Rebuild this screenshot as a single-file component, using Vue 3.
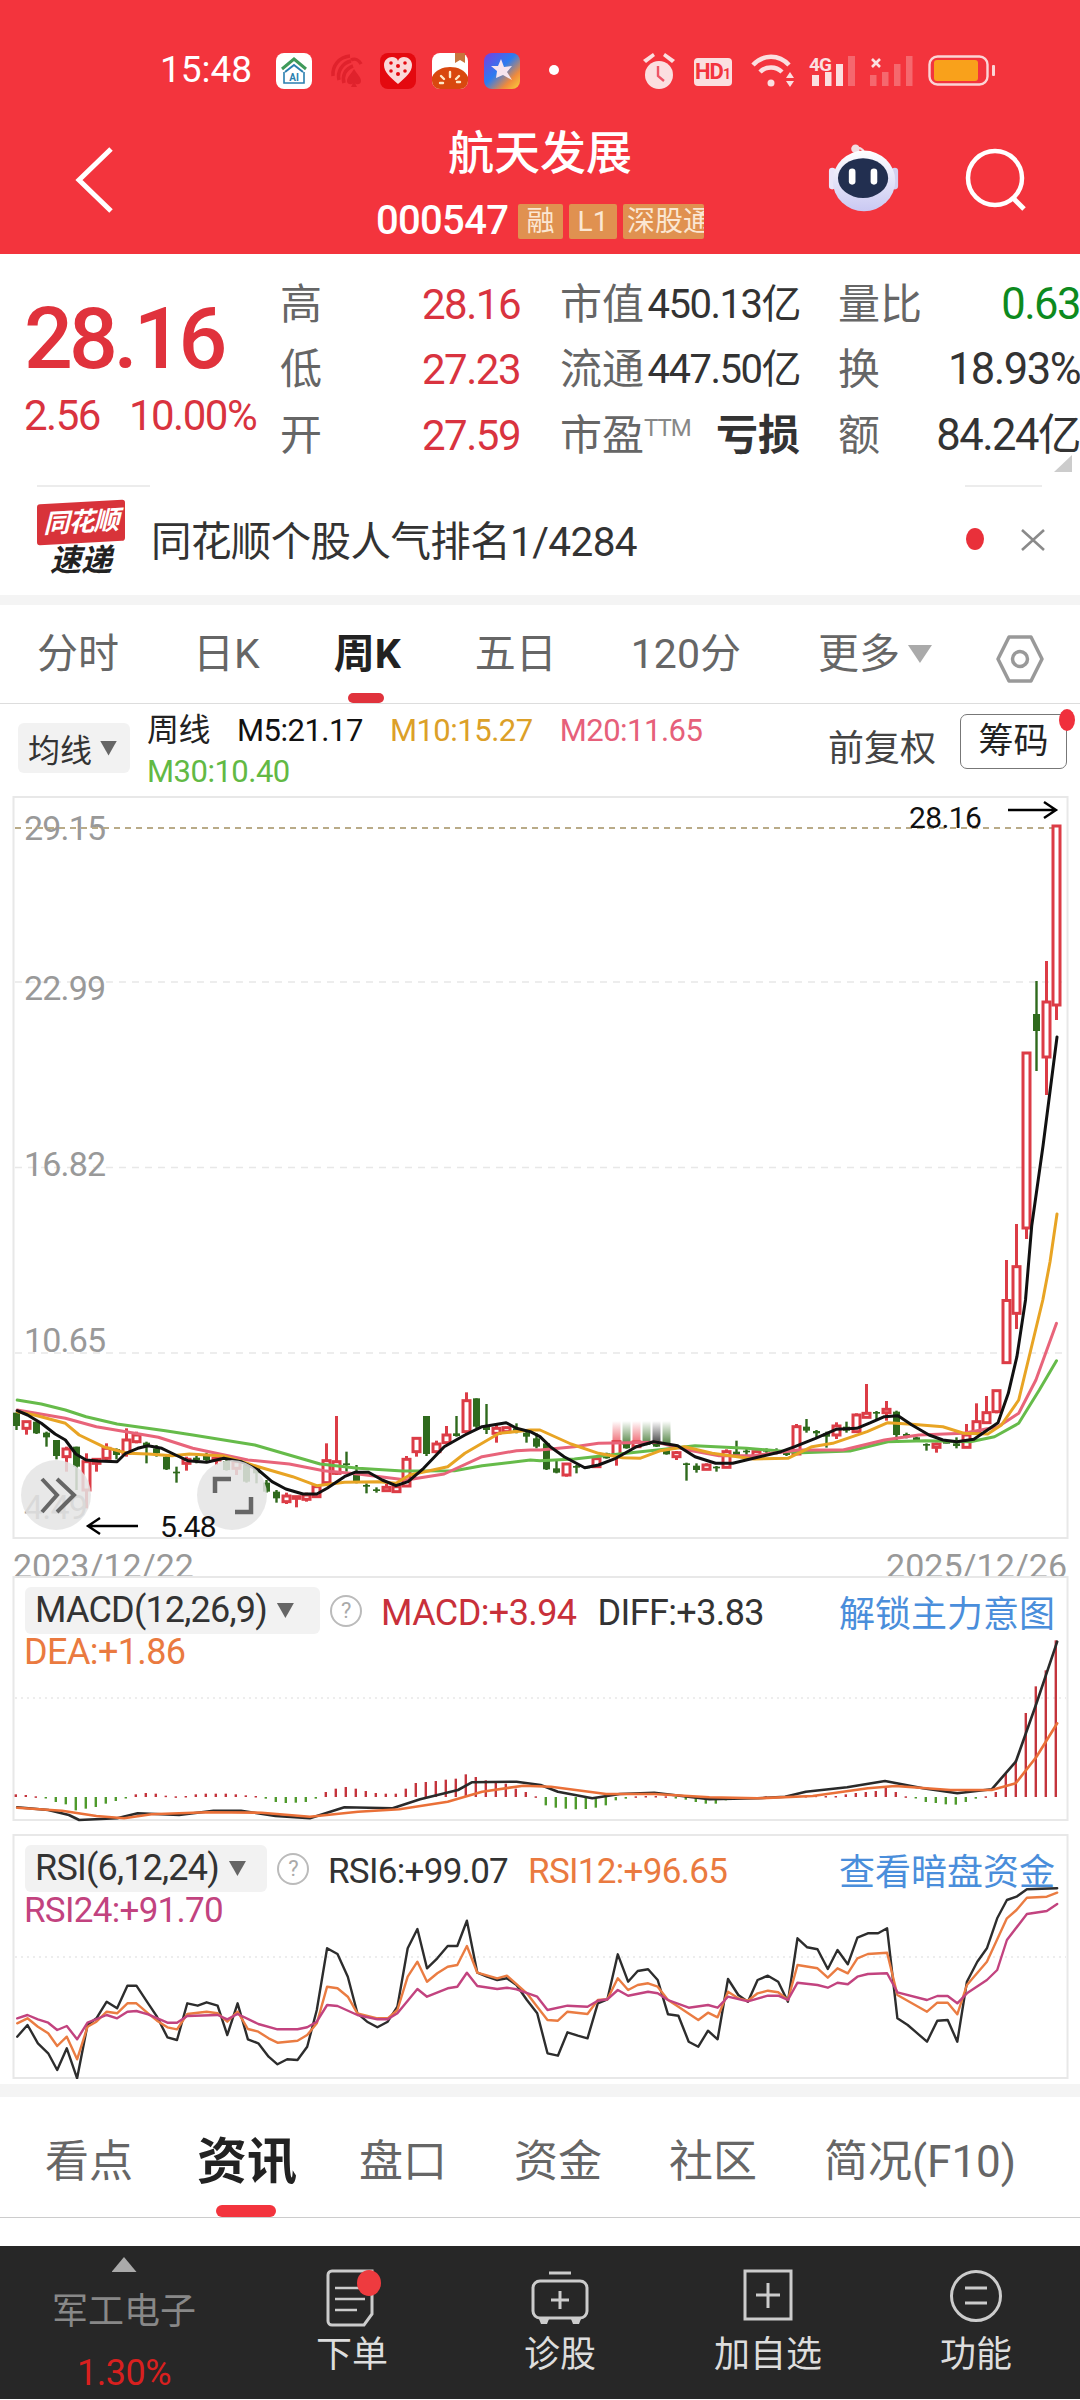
<script setup>
const Y = (z) => 1300 + z / 3
const line4 = (pts) => pts.map(([x, y]) => `${(x / 2.904).toFixed(1)},${Y(y).toFixed(1)}`)
const line5 = (pts) => pts.map(([x, y]) => `${(540 + x / 2.904).toFixed(1)},${Y(y).toFixed(1)}`)

const ma5 = [...line4([[50,332],[80,345],[120,370],[160,402],[190,420],[220,462],[250,480],[285,483],[340,485],[365,460],[400,445],[430,437],[470,445],[510,465],[545,482],[600,487],[650,475],[700,485],[750,510],[790,545],[830,567],[880,582],[920,582],[950,565],[1000,530],[1030,517],[1070,517],[1110,540],[1150,557],[1185,545],[1230,505],[1290,440],[1350,405],[1400,380],[1470,368],[1500,385],[1540,395]]),
  ...line5([[0,410],[30,440],[70,470],[130,503],[170,495],[220,475],[280,440],[330,425],[400,437],[450,470],[510,490],[560,490],[620,475],[700,455],[740,440],[800,415],[860,388],[920,385],[960,368],[1000,350],[1040,347],[1080,375],[1130,405],[1170,420],[1210,425],[1260,418],[1330,368],[1360,280],[1385,170],[1410,0]]), '1031.7,1226', '1043,1146', '1057,1037'].join(' ')
const ma10 = [...line4([[50,335],[100,345],[190,370],[230,405],[300,440],[370,460],[430,462],[500,467],[550,462],[650,468],[750,500],[850,530],[920,557],[1000,547],[1100,545],[1150,550],[1190,525],[1300,500],[1350,460],[1450,400],[1540,390]]),
  ...line5([[0,390],[90,432],[170,460],[240,473],[290,475],[350,452],[420,440],[500,460],[620,477],[720,475],[790,440],[850,430],[950,395],[1010,368],[1080,373],[1170,380],[1230,400],[1300,402],[1340,375],[1390,300],[1460,0]]), '1050,1262', '1057,1214'].join(' ')
const ma20 = [...line4([[50,330],[190,355],[280,380],[460,412],[560,445],[720,480],[840,492],[940,512],[1040,522],[1180,540],[1290,522],[1400,470],[1500,452],[1540,450]]),
  ...line5([[0,450],[100,440],[170,430],[340,427],[430,450],[520,467],[620,467],[750,450],[880,450],[1000,420],[1100,405],[1230,400],[1330,380],[1390,340],[1440,240],[1500,70]])].join(' ')
const ma30 = [...line4([[50,300],[120,312],[190,330],[250,350],[340,372],[480,392],[560,405],[740,435],[930,492],[1040,505],[1170,513],[1320,512],[1400,497],[1540,480]]),
  ...line5([[0,482],[100,477],[230,462],[340,450],[450,437],[600,445],[760,458],[900,453],[1010,425],[1120,422],[1250,425],[1320,410],[1390,370],[1450,270],[1500,182]])].join(' ')

const raw = [
['g',338,338,378,390],['r',365,365,385,404],['g',365,365,400,402],['g',395,398,412,440],['g',420,420,468,478],['r',440,447,470,515],['g',440,440,500,570],['r',460,485,570,625],['r',475,478,490,515],['r',430,445,475,480],
['g',445,447,465,478],['r',385,420,460,470],['r',395,405,425,430],['g',425,428,440,490],['g',435,445,460,470],['g',465,470,508,510],['g',500,515,520,548],['r',470,478,490,512],['g',468,473,480,490],['g',458,465,480,488],
['r',470,475,480,495],['g',475,483,510,512],['r',480,485,505,525],['g',490,495,545,548],['g',500,505,520,550],['g',540,548,575,578],['g',570,575,595,608],['r',578,588,605,612],['r',588,590,592,622],['r',578,585,598,605],
['r',558,560,590,592],['r',430,482,548,555],['r',348,485,520,525],['g',455,490,492,515],['g',495,520,545,550],['g',550,555,560,580],['g',562,568,572,578],['r',552,562,572,575],['r',555,560,575,578],['r',468,478,558,560],
['r',412,415,455,470],['g',348,348,462,468],['r',422,432,455,460],['r',378,405,428,430],['g',348,400,408,410],['r',277,302,395,405],['g',295,295,380,385],['g',312,375,390,402],['r',375,385,400,428],['r',380,383,395,400],
['g',370,385,392,400],['g',390,398,410,428],['g',400,415,440,445],['g',430,430,508,510],['g',480,505,518,520],['r',490,492,525,530],['g',495,498,500,520],['g',498,498,505,506],['r',472,476,500,503],['g',458,460,475,476],
['r',425,425,465,497],['g',430,432,445,446],['r',425,426,440,441],['g',430,430,435,436],['g',425,426,440,441],['g',445,450,463,464],['r',453,458,470,480],['g',488,490,495,542],['g',490,497,510,518],['r',490,495,508,510],
['g',498,500,505,515],['r',448,455,502,504],['g',422,455,465,470],['g',445,452,455,465],['r',452,455,470,472],['g',445,450,455,465],['g',445,452,458,463],['g',452,455,465,468],['r',372,380,462,465],['g',357,380,392,398],
['g',390,393,400,412],['g',395,400,410,443],['r',367,378,405,417],['g',365,380,392,398],['r',340,345,395,398],['r',252,340,352,354],['g',333,336,340,362],['r',303,328,338,362],['g',332,335,405,420],['g',398,402,408,415],
['g',410,412,420,422],['g',430,432,435,452],['r',428,432,442,458],['g',425,426,428,430],['g',412,430,438,445],['r',372,405,442,443],['r',310,365,395,400],['r',288,338,368,370],['r',270,272,335,340],['r',-120,1.5,188,190],
['r',-228,-100,40,87],['r',-741,-741,-216,-183],['g',-957,-858,-807,-687],['r',-1017,-894,-729,-615],['r',-1422,-1422,-885,-840]]
const candles = raw.map(([c, h, t, b, l], i) => ({
  c, x: 16.5 + 10 * i, h: Y(h), t: Y(t), b: Y(Math.max(b, t + 5)), l: Y(l), key: i
}))
const fades = [
  { x: 616.5, id: 'fr' }, { x: 626.5, id: 'fg' }, { x: 636.5, id: 'fr' },
  { x: 646.5, id: 'fg' }, { x: 656.5, id: 'fk' }, { x: 666.5, id: 'fg' }
]

const mx = (x) => (x / 1.452).toFixed(1)
const my = (y) => (1570 + y / 3).toFixed(1)
const mpts = (a) => a.map(([x, y]) => `${mx(x)},${my(y)}`).join(' ')
const diff = mpts([[25,712],[70,720],[100,735],[115,750],[170,745],[200,730],[260,735],[310,722],[350,722],[400,738],[450,745],[500,712],[570,715],[610,688],[665,660],[685,637],[750,635],[785,645],[810,665],[860,685],[900,672],[950,668],[1030,688],[1100,685],[1140,680],[1170,665],[1230,652],[1285,633],[1340,655],[1390,670],[1440,658],[1475,575],[1505,400],[1535,215]])
const dea = mpts([[25,713],[90,722],[140,738],[180,745],[220,733],[300,727],[380,728],[450,740],[520,725],[580,718],[650,695],[700,665],[760,647],[800,650],[880,672],[950,672],[1030,682],[1100,685],[1180,678],[1260,655],[1300,648],[1380,660],[1440,660],[1475,640],[1505,560],[1535,460]])
const barH = [8,6,2,-2,-15,-22,-40,-35,-30,-20,-12,-2,8,12,10,4,2,3,8,10,10,10,8,5,3,-5,-15,-18,-17,-15,-5,15,25,30,25,18,12,10,10,25,42,45,48,52,55,68,60,50,45,40,25,15,2,-25,-32,-35,-37,-36,-32,-25,-10,-5,2,3,3,2,-3,-8,-15,-20,-20,-10,-3,-2,-2,2,2,2,2,3,4,3,3,8,12,15,18,30,15,2,-2,-15,-18,-22,-23,-15,-5,2,15,70,110,252,332,380,470]
const bars = barH.map((h, i) => ({
  x: 15.8 + 10 * i,
  y: h >= 0 ? 1797 - h / 3 : 1797,
  h: Math.max(Math.abs(h) / 3, 1.5),
  c: h >= 0 ? '#c4343c' : '#4f9a2c',
  key: i
}))

const rp = (a) => a.map(([x, y]) => `${(x / 1.452).toFixed(1)},${(1830 + y / 3).toFixed(1)}`).join(' ')
const rsi6 = rp([[25,620],[40,585],[55,640],[70,670],[83,720],[97,655],[112,745],[127,585],[140,565],[155,515],[170,535],[185,467],[198,467],[215,520],[228,560],[243,622],[257,630],[272,520],[287,527],[300,517],[316,527],[330,615],[345,520],[360,628],[375,640],[390,680],[403,703],[417,688],[432,690],[446,650],[460,540],[475,355],[490,372],[505,440],[519,550],[533,575],[548,592],[563,575],[577,530],[592,355],[606,297],[620,415],[635,385],[650,348],[664,348],[678,272],[693,428],[707,440],[722,450],[736,445],[750,465],[765,510],[780,550],[795,670],[810,677],[824,607],[839,617],[853,625],[868,520],[882,508],[897,373],[912,455],[926,423],[941,418],[955,450],[970,553],[985,557],[1000,635],[1014,650],[1028,602],[1042,628],[1057,447],[1072,495],[1086,515],[1100,450],[1115,437],[1130,455],[1144,515],[1158,325],[1172,352],[1187,358],[1202,417],[1216,360],[1231,403],[1245,323],[1260,310],[1275,310],[1288,295],[1303,565],[1318,585],[1332,610],[1346,635],[1361,572],[1376,570],[1390,635],[1404,455],[1419,395],[1433,355],[1448,265],[1462,210],[1476,200],[1491,178],[1535,175]])
const rsi12 = rp([[25,580],[40,565],[55,590],[70,610],[83,648],[97,620],[112,688],[127,590],[140,575],[155,545],[170,550],[185,520],[198,520],[215,550],[228,572],[243,592],[257,598],[272,552],[300,545],[316,550],[330,575],[345,545],[360,597],[375,605],[390,625],[403,638],[432,632],[446,615],[460,580],[475,470],[490,475],[505,500],[519,550],[548,565],[563,565],[577,540],[592,440],[606,395],[620,455],[635,430],[650,410],[664,405],[678,348],[693,428],[722,445],[736,437],[765,490],[780,530],[795,570],[810,572],[824,545],[853,552],[868,510],[882,508],[897,445],[912,480],[926,465],[941,460],[955,470],[970,510],[985,530],[1014,570],[1028,548],[1042,562],[1057,485],[1072,505],[1086,512],[1100,490],[1115,482],[1130,487],[1144,510],[1158,405],[1187,415],[1202,443],[1216,415],[1231,430],[1245,385],[1260,372],[1288,368],[1303,495],[1346,545],[1361,518],[1376,518],[1390,553],[1404,465],[1433,395],[1462,265],[1476,240],[1491,203],[1520,200],[1535,188]])
const rsi24 = rp([[25,565],[40,555],[55,568],[70,578],[83,600],[97,588],[112,628],[127,578],[155,555],[170,565],[185,545],[198,543],[215,553],[243,578],[257,578],[272,558],[316,555],[330,568],[345,552],[375,582],[403,598],[432,598],[446,592],[460,575],[475,525],[490,528],[519,555],[548,568],[563,568],[577,550],[606,477],[620,500],[650,475],[664,470],[678,428],[693,468],[722,477],[736,473],[750,478],[780,500],[795,540],[824,527],[853,530],[868,512],[882,508],[897,480],[912,497],[941,485],[955,490],[970,510],[1000,533],[1028,525],[1042,533],[1057,500],[1086,514],[1115,497],[1130,497],[1144,510],[1158,458],[1187,465],[1202,473],[1216,458],[1231,463],[1245,440],[1260,432],[1288,430],[1303,487],[1346,510],[1361,498],[1376,498],[1390,520],[1404,490],[1433,450],[1448,420],[1462,330],[1491,252],[1520,243],[1535,222]])

const grids = [982, 1167.5, 1353]
const yLabels = [
  { t: '29.15', y: 840 }, { t: '22.99', y: 1000 }, { t: '16.82', y: 1176 }, { t: '10.65', y: 1352 }
]
const tabs = ['分时', '日K', '周K', '五日', '120分']
const infoTabs = ['看点', '资讯', '盘口', '资金', '社区', '简况(F10)']
</script>

<template>
  <div class="page">
    <header class="head">
      <div class="status">
        <span class="time">15:48</span>
        <svg class="status-icons" width="750" height="50" viewBox="270 45 750 50">
          <defs>
            <linearGradient id="stb" x1="0" y1="0" x2="1" y2="1">
              <stop offset="0" stop-color="#7a3ee0" />
              <stop offset=".45" stop-color="#2b7cf0" />
              <stop offset=".75" stop-color="#f08a3c" />
              <stop offset="1" stop-color="#f9d23c" />
            </linearGradient>
          </defs>
          <rect x="277" y="53" width="36" height="36" rx="8" fill="#fff" />
          <path d="M283 69 L295 59 L307 69" fill="none" stroke="#3f9a5a" stroke-width="3" />
          <path d="M286 72 L295 65 L304 72" fill="none" stroke="#2a7fb0" stroke-width="2" />
          <path d="M285 72 V83 H305 V72" fill="none" stroke="#2a7fb0" stroke-width="1.6" />
          <text x="295" y="81" class="ai">AI</text>

          <g fill="none" stroke="#e0222c" stroke-width="3.5">
            <path d="M334 76 C333 66 340 57 351 56" />
            <path d="M340 80 C338 72 343 63 352 61" />
            <path d="M345 83 C343 76 346 69 354 66" />
            <path d="M352 60 C356 58 360 60 362 64" />
          </g>
          <path d="M355 69 C358 74 362 77 362 81 C362 85 357 85 356 83 L358 87 H352 L354 83 C353 85 348 85 348 81 C348 77 352 74 355 69Z" fill="#e0222c" />

          <rect x="381" y="53" width="36" height="36" rx="8" fill="#e4090f" />
          <path d="M399 84 C391 77 385 72 385 65 C385 60 389 57 393 57 C396 57 398 58 399 61 C400 58 402 57 405 57 C409 57 413 60 413 65 C413 72 407 77 399 84Z" fill="#fbd8d8" />
          <g fill="#e4090f">
            <circle cx="392" cy="63" r="1.8" /><circle cx="399" cy="66" r="2" /><circle cx="406" cy="63" r="1.8" />
            <circle cx="392" cy="71" r="1.8" /><circle cx="399" cy="74" r="2" /><circle cx="406" cy="71" r="1.8" />
          </g>

          <rect x="433" y="53" width="36" height="36" rx="8" fill="#fff" />
          <path d="M433 77 C436 70 444 67 451 67 C459 67 466 70 469 77 V81 A8 8 0 0 1 461 89 H441 A8 8 0 0 1 433 81Z" fill="#d9480f" />
          <path d="M456 53 H466 V63 L461 60 L456 63Z" fill="#c8743c" />
          <g stroke="#ffe9c8" stroke-width="2.4" stroke-linecap="round">
            <path d="M451 72 V77" /><path d="M442 76 L445 79" /><path d="M460 76 L457 79" /><path d="M441 83 H444" /><path d="M458 82 H461" />
          </g>

          <rect x="485" y="53" width="36" height="36" rx="8" fill="url(#stb)" />
          <path d="M502 59 L505 67 L513 66 L508 72 L513 80 L504 75 L497 78 L498 71 L492 66 L499 66Z" fill="#f6e4ee" />

          <circle cx="555" cy="70" r="5" fill="#fff" />

          <g fill="#fbdfe0">
            <circle cx="660" cy="75" r="14" />
            <path d="M644 60 L654 53 L656 56 L647 63Z" /><path d="M676 60 L666 53 L664 56 L673 63Z" />
            <rect x="695" y="58" width="38" height="28" rx="4" />
          </g>
          <path d="M659 66 V76 L665 81" fill="none" stroke="#e56" stroke-width="2.4" />
          <text x="713.5" y="79" class="hd">HD<tspan class="hd1">1</tspan></text>

          <g fill="none" stroke="#fbdfe0" stroke-width="4.5">
            <path d="M754 65 C764 54 780 54 790 65" />
            <path d="M761 72 C767 66 777 66 783 72" />
          </g>
          <circle cx="772" cy="83" r="3.5" fill="#fbdfe0" />
          <path d="M791 72 L795 78 H787Z M791 87 L787 81 H795Z" fill="#fbdfe0" />

          <text x="810" y="71" class="g4">4G</text>
          <g fill="#fbdfe0">
            <rect x="813" y="75" width="7" height="11" /><rect x="826" y="72" width="6.5" height="14" /><rect x="837" y="64" width="7" height="22" />
          </g>
          <rect x="849" y="56" width="7" height="30" fill="#fbdfe0" opacity=".3" />
          <g fill="#fbdfe0" opacity=".3">
            <rect x="871" y="75" width="6.5" height="11" /><rect x="883" y="72" width="6.5" height="14" /><rect x="895" y="64" width="6.5" height="22" /><rect x="907" y="56" width="6.5" height="30" />
          </g>
          <path d="M873 59 L881 67 M881 59 L873 67" stroke="#fbdfe0" stroke-width="2.6" />

          <rect x="930.5" y="56.5" width="58" height="28" rx="8" fill="none" stroke="#fbd5d6" stroke-width="2.4" />
          <rect x="935" y="60" width="44" height="21" rx="3" fill="#f9a11b" />
          <rect x="993" y="65" width="3" height="11" rx="1" fill="#fbd5d6" />
        </svg>
      </div>
      <div class="bar">
        <div class="bar-left">
          <svg width="40" height="70" viewBox="0 0 40 70">
            <path d="M36 4 L4 35 L36 66" fill="none" stroke="#fff" stroke-width="5" />
          </svg>
        </div>
        <div class="bar-mid">
          <div class="title">航天发展</div>
          <div class="code-row">
            <span class="code">000547</span>
            <span class="tag t1">融</span>
            <span class="tag t2">L1</span>
            <span class="tag t3"><span class="tag-clip">深股通</span></span>
          </div>
        </div>
        <div class="bar-right">
          <svg width="74" height="72" viewBox="0 0 78 76" class="robot">
            <defs>
              <linearGradient id="rb" x1="0" y1="0" x2="0" y2="1">
                <stop offset="0" stop-color="#ffffff" />
                <stop offset="1" stop-color="#c9c8f2" />
              </linearGradient>
            </defs>
            <circle cx="30" cy="6" r="4.5" fill="#f1dde2" />
            <path d="M30 5 C37 4 40 9 40 15" fill="none" stroke="#f1dde2" stroke-width="2.4" />
            <rect x="2" y="26" width="7" height="23" rx="3.5" fill="#e9e6fa" />
            <rect x="68" y="26" width="7" height="23" rx="3.5" fill="#d3d0ef" />
            <ellipse cx="39" cy="40" rx="33" ry="32" fill="url(#rb)" />
            <ellipse cx="38" cy="37" rx="26.5" ry="21" fill="#222f50" />
            <rect x="23" y="27" width="7" height="17" rx="3.5" fill="#fff" />
            <rect x="46" y="27" width="7" height="17" rx="3.5" fill="#fff" />
          </svg>
          <svg width="66" height="66" viewBox="0 0 66 66" class="search">
            <circle cx="31" cy="31" r="27" fill="none" stroke="#fff" stroke-width="4.5" />
            <path d="M49 51 L60 62" stroke="#fff" stroke-width="5" />
          </svg>
        </div>
      </div>
    </header>

    <section class="quote">
      <div class="price">
        <div class="big">28.16</div>
        <div class="chg"><span>2.56</span><span>10.00%</span></div>
      </div>
      <div class="qgrid">
        <span class="lb">高</span><span class="vr">28.16</span>
        <div class="pair mid"><span class="lb">市值</span><span class="vd">450.13亿</span></div>
        <div class="pair last"><span class="lb">量比</span><span class="vg">0.63</span></div>
        <span class="lb">低</span><span class="vr">27.23</span>
        <div class="pair mid"><span class="lb">流通</span><span class="vd">447.50亿</span></div>
        <div class="pair last"><span class="lb">换</span><span class="vd">18.93%</span></div>
        <span class="lb">开</span><span class="vr">27.59</span>
        <div class="pair mid"><span class="lb">市盈<sup class="ttm">TTM</sup></span><span class="loss">亏损</span></div>
        <div class="pair last"><span class="lb">额</span><span class="vd">84.24亿</span></div>
      </div>
      <i class="corner"></i>
    </section>

    <section class="news">
      <i class="hair h1"></i><i class="hair h2"></i>
      <div class="logo">
        <span class="logo-top">同花顺</span>
        <span class="logo-bot">速递</span>
      </div>
      <span class="news-text">同花顺个股人气排名1/4284</span>
      <i class="rdot"></i>
      <svg width="26" height="24" viewBox="0 0 26 24" class="close">
        <path d="M2 2 L24 22 M24 2 L2 22" stroke="#8a8a8a" stroke-width="2.6" />
      </svg>
    </section>

    <div class="sep"></div>

    <nav class="tabs">
      <span v-for="t in tabs" :key="t" class="tab" :class="{ on: t === '周K' }">{{ t }}</span>
      <span class="tab more">更多<i class="tri"></i></span>
      <svg class="hex" width="50" height="50" viewBox="0 0 50 50">
        <path d="M14 3 H36 L47 25 L36 47 H14 L3 25Z" fill="none" stroke="#999" stroke-width="3.5" stroke-linejoin="round" />
        <circle cx="25" cy="25" r="7.5" fill="none" stroke="#999" stroke-width="3.5" />
      </svg>
    </nav>

    <div class="indicator">
      <span class="chip ma">均线<i class="tri small"></i></span>
      <div class="ma-values">
        <span class="zx">周线</span><span class="m5">M5:21.17</span><span class="m10">M10:15.27</span><span class="m20">M20:11.65</span><span class="m30">M30:10.40</span>
      </div>
      <span class="fq">前复权</span>
      <span class="cm">筹码</span>
    </div>

    <svg class="main-chart" width="1060" height="743" viewBox="12 796 1060 743">
      <defs>
        <linearGradient id="fr" x1="0" y1="0" x2="0" y2="1"><stop offset="0" stop-color="#e9404c" stop-opacity="0" /><stop offset="1" stop-color="#e9404c" stop-opacity=".85" /></linearGradient>
        <linearGradient id="fg" x1="0" y1="0" x2="0" y2="1"><stop offset="0" stop-color="#2f6a1d" stop-opacity="0" /><stop offset="1" stop-color="#2f6a1d" stop-opacity=".85" /></linearGradient>
        <linearGradient id="fk" x1="0" y1="0" x2="0" y2="1"><stop offset="0" stop-color="#222" stop-opacity="0" /><stop offset="1" stop-color="#222" stop-opacity=".9" /></linearGradient>
      </defs>
      <rect x="13.5" y="797" width="1054" height="741" fill="#fff" stroke="#e8e8e8" stroke-width="2" />
      <line v-for="g in grids" :key="g" x1="15" x2="1066" :y1="g" :y2="g" stroke="#e8e8e8" stroke-width="1.5" stroke-dasharray="7 6" />
      <text v-for="l in yLabels" :key="l.t" x="24" :y="l.y" class="ylab">{{ l.t }}</text>
      <line x1="15" x2="1058" y1="828" y2="828" stroke="#b9ab88" stroke-width="2" stroke-dasharray="6 5" />
      <rect v-for="f in fades" :key="f.x" :x="f.x - 4" y="1421" width="8" height="24" :fill="`url(#${f.id})`" />
      <g v-for="c in candles" :key="c.key">
        <template v-if="c.c === 'r'">
          <rect :x="c.x - 1.5" :y="c.h" width="3" :height="c.l - c.h" fill="#dc3c46" />
          <rect :x="c.x - 3.5" :y="c.t" width="7" :height="c.b - c.t" fill="#fff" stroke="#dc3c46" stroke-width="3" />
        </template>
        <template v-else>
          <rect :x="c.x - 1.2" :y="c.h" width="2.4" :height="c.l - c.h" fill="#2f6a1d" />
          <rect :x="c.x - 3.5" :y="c.t" width="7" :height="c.b - c.t" fill="#2f6a1d" />
        </template>
      </g>
      <polyline :points="ma30" class="ln" stroke="#66bb4a" />
      <polyline :points="ma20" class="ln" stroke="#e8647a" />
      <polyline :points="ma10" class="ln" stroke="#e8a424" />
      <polyline :points="ma5" class="ln" stroke="#111" />
      <text x="909" y="828" class="plab">28.16</text>
      <path d="M1008 810 H1056 M1044 802 L1056 810 L1044 818" fill="none" stroke="#000" stroke-width="2.4" />
      <text x="24" y="1519" class="ylab">4.49</text>
      <circle cx="56" cy="1495" r="35" fill="#e4e4e4" opacity=".85" />
      <circle cx="232" cy="1495" r="35" fill="#e4e4e4" opacity=".85" />
      <path d="M42 1479 L57 1495 L42 1512 M57 1479 L74 1495 L57 1512" fill="none" stroke="#666" stroke-width="4" />
      <path d="M215 1493 V1479 H231 M235 1512 H251 V1497" fill="none" stroke="#666" stroke-width="4.5" />
      <path d="M138 1526 H88 M100 1518 L88 1526 L100 1534" fill="none" stroke="#000" stroke-width="2.4" />
      <text x="160" y="1537" class="plab">5.48</text>
    </svg>

    <div class="dates"><span>2023/12/22</span><span>2025/12/26</span></div>

    <div class="panel macd">
      <svg width="1060" height="246" viewBox="12 1576 1060 246">
        <rect x="13.5" y="1577" width="1054" height="243" fill="#fff" stroke="#e8e8e8" stroke-width="2" />
        <line x1="15" x2="1066" y1="1698" y2="1698" stroke="#e8e8e8" stroke-width="1.5" stroke-dasharray="2 4" />
        <rect v-for="b in bars" :key="b.key" :x="b.x - 1.2" :y="b.y" width="2.4" :height="b.h" :fill="b.c" />
        <polyline :points="diff" class="ln2" stroke="#2a2a2a" />
        <polyline :points="dea" class="ln2" stroke="#ea7038" />
      </svg>
      <div class="ph">
        <span class="chip pchip">MACD(12,26,9)<i class="tri small"></i></span>
        <i class="q">?</i>
        <span class="c-red">MACD:+3.94</span>
        <span class="c-dark gapd">DIFF:+3.83</span>
        <span class="link">解锁主力意图</span>
        <span class="second c-or">DEA:+1.86</span>
      </div>
    </div>

    <div class="panel rsi">
      <svg width="1060" height="245" viewBox="12 1834 1060 245">
        <rect x="13.5" y="1835" width="1054" height="243" fill="#fff" stroke="#e8e8e8" stroke-width="2" />
        <line x1="15" x2="1066" y1="1957" y2="1957" stroke="#e8e8e8" stroke-width="1.5" stroke-dasharray="2 4" />
        <polyline :points="rsi6" class="ln3" stroke="#2d2d2d" />
        <polyline :points="rsi12" class="ln3" stroke="#ea7c42" />
        <polyline :points="rsi24" class="ln3" stroke="#c2437f" />
      </svg>
      <div class="ph rsi-h">
        <span class="chip pchip rchip">RSI(6,12,24)<i class="tri small"></i></span>
        <i class="q">?</i>
        <span class="c-dark">RSI6:+99.07</span>
        <span class="c-or">RSI12:+96.65</span>
        <span class="link">查看暗盘资金</span>
        <span class="second c-pk">RSI24:+91.70</span>
      </div>
    </div>

    <div class="sep sep2"></div>

    <nav class="itabs">
      <span v-for="t in infoTabs" :key="t" class="itab" :class="{ on: t === '资讯' }">{{ t }}</span>
    </nav>

    <footer class="foot">
      <div class="sector">
        <i class="up"></i>
        <span class="s-name">军工电子</span>
        <span class="s-pct">1.30%</span>
      </div>
      <div class="act">
        <svg width="60" height="60" viewBox="0 0 60 60">
          <path d="M10 3 H50 V46 L42 57 H10 A4 4 0 0 1 6 53 V7 A4 4 0 0 1 10 3Z" fill="none" stroke="#ccc" stroke-width="3" />
          <path d="M13 20 H38 M13 31 H43 M13 42 H35" stroke="#ccc" stroke-width="2.6" />
          <ellipse cx="47" cy="15" rx="12" ry="13" fill="#ee3b3f" />
        </svg>
        <span>下单</span>
      </div>
      <div class="act">
        <svg width="60" height="60" viewBox="0 0 60 60">
          <path d="M19 5 H41" stroke="#ccc" stroke-width="3" />
          <rect x="3" y="13" width="54" height="37" rx="7" fill="none" stroke="#ccc" stroke-width="3" />
          <path d="M30 23 V41 M21 32 H39" stroke="#ccc" stroke-width="3" />
          <path d="M9 51 H19 L17 56 H11Z M41 51 H51 L49 56 H43Z" fill="#ccc" />
        </svg>
        <span>诊股</span>
      </div>
      <div class="act">
        <svg width="60" height="60" viewBox="0 0 60 60">
          <rect x="7" y="3" width="46" height="48" fill="none" stroke="#ccc" stroke-width="3" />
          <path d="M30 15 V40 M18 27 H42" stroke="#ccc" stroke-width="3" />
        </svg>
        <span>加自选</span>
      </div>
      <div class="act">
        <svg width="60" height="60" viewBox="0 0 60 60">
          <circle cx="30" cy="28" r="24.5" fill="none" stroke="#ccc" stroke-width="3" />
          <path d="M19 20 H41 M19 35 H41" stroke="#ccc" stroke-width="3" />
        </svg>
        <span>功能</span>
      </div>
    </footer>
  </div>
</template>

<style scoped>
.page {
  width: 1080px;
  height: 2400px;
  background: #fff;
  overflow: hidden;
  font-family: Roboto, "Noto Sans CJK SC", sans-serif;
  color: #333;
}
i { font-style: normal; display: block; }

.head { height: 254px; background: #f3343d; color: #fff; }
.status { height: 110px; display: flex; align-items: flex-start; position: relative; }
.time { font-size: 37px; line-height: 44px; margin: 48px 0 0 160px; }
.status-icons { margin: 45px 0 0 17px; flex: none; }
.ai { font: 700 10px Roboto, sans-serif; fill: #2a7fb0; text-anchor: middle; }
.hd { font: 700 22px Roboto, sans-serif; fill: #f3343d; text-anchor: middle; letter-spacing: -1px; }
.hd1 { font-size: 14px; }
.g4 { font: 700 19px Roboto, sans-serif; fill: #fbdfe0; letter-spacing: -1px; }

.bar { display: grid; grid-template-columns: 1fr 328px 1fr; height: 144px; }
.bar-left { padding: 35px 0 0 75px; }
.bar-mid { display: flex; flex-direction: column; align-items: center; }
.title { font-size: 46px; line-height: 60px; margin-top: 13px; font-weight: 500; }
.code-row { display: flex; align-items: center; width: 328px; margin-top: 20px; height: 36px; }
.code { font-size: 40px; line-height: 36px; letter-spacing: -.7px; width: 142px; flex: none; font-weight: 500; }
.tag { background: #e09150; color: #fbe7d3; font-size: 28px; height: 35px; line-height: 35px; text-align: center; border-radius: 2px; flex: none; }
.t1 { width: 45px; }
.t2 { width: 48px; margin-left: 6px; }
.t3 { width: 81px; margin-left: 6px; overflow: hidden; white-space: nowrap; }
.tag-clip { display: block; width: 90px; margin-left: 4px; text-align: left; }
.bar-right { display: flex; justify-content: flex-end; padding: 22px 0 0 0; }
.robot { margin: 11px 63px 0 0; }
.search { margin: 15px 50px 0 0; }

.quote { height: 231px; display: flex; position: relative; }
.price { width: 280px; flex: none; padding-left: 24px; box-sizing: border-box; }
.big { font-size: 86px; line-height: 86px; margin-top: 42px; font-weight: 500; color: #e0323c; letter-spacing: -4px; white-space: nowrap; }
.chg { display: flex; gap: 29px; font-size: 42px; line-height: 44px; margin-top: 12px; color: #d9333f; letter-spacing: -1.5px; white-space: nowrap; }
.qgrid { display: grid; grid-template-columns: 142px 138px 278px 240px; grid-auto-rows: 65.5px; padding-top: 18px; align-items: center; }
.lb { font-size: 42px; line-height: 50px; color: #666; white-space: nowrap; }
.vr, .vd, .vg { font-size: 42px; line-height: 50px; letter-spacing: -1.5px; white-space: nowrap; }
.vr { color: #d9333f; }
.vd { color: #333; }
.vg { color: #0d8a1e; }
.pair { display: flex; justify-content: space-between; align-items: center; }
.pair.mid { padding-right: 38px; }
.pair.mid .vd { font-size: 40px; }
.pair.last { margin-right: -2px; }
.pair.last .vd, .pair.last .vg { font-size: 43.5px; }
.ttm { font-size: 24px; line-height: 0; vertical-align: 14px; color: #888; letter-spacing: -1px; }
.loss { font-size: 42px; line-height: 50px; font-weight: 700; color: #333; }
.corner { position: absolute; left: 1054px; top: 201px; width: 18px; height: 17px; background: #ccc; clip-path: polygon(100% 0, 100% 100%, 0 100%); }

.news { height: 110px; display: flex; align-items: center; position: relative; }
.hair { position: absolute; top: 0; height: 1.5px; background: #ececec; }
.h1 { left: 37px; width: 113px; }
.h2 { left: 965px; width: 77px; }
.logo { width: 88px; margin-left: 37px; height: 74px; flex: none; display: flex; flex-direction: column; align-items: center; margin-top: -2px; }
.logo-top { width: 88px; height: 41px; background: #d8333a; color: #fff; font-size: 26px; line-height: 41px; font-weight: 700; font-style: italic; text-align: center; white-space: nowrap; border-radius: 3px; letter-spacing: -1px; transform: skewY(-3deg); }
.logo-bot { font-size: 31px; line-height: 32px; font-weight: 700; font-style: italic; color: #222; margin-top: 2px; }
.news-text { font-size: 40.5px; line-height: 50px; color: #333; margin: 3px 0 0 26px; letter-spacing: -.6px; white-space: nowrap; }
.rdot { width: 18px; height: 22px; border-radius: 50%; background: #e9303a; position: absolute; left: 966px; top: 43px; }
.close { position: absolute; left: 1020px; top: 43px; }

.sep { height: 10px; background: #f4f4f4; }

.tabs { height: 98px; border-bottom: 1.5px solid #ddd; display: flex; align-items: center; padding-left: 37px; gap: 74px; position: relative; }
.tab { font-size: 41px; line-height: 50px; color: #666; white-space: nowrap; }
.tab.on { color: #222; font-weight: 700; }
.tab.on::after { content: ""; position: absolute; left: 348px; top: 88px; width: 36px; height: 10px; background: #e0323c; border-radius: 5px; }
.more { display: flex; align-items: center; gap: 8px; margin-left: 3px; }
.tri { width: 24px; height: 18px; background: #aaa; clip-path: polygon(0 0, 100% 0, 50% 100%); }
.tri.small { width: 17px; height: 15px; background: #666; }
.hex { position: absolute; left: 995px; top: 29px; }

.indicator { height: 92px; position: relative; }
.chip { background: #f2f2f2; border-radius: 6px; display: flex; align-items: center; white-space: nowrap; }
.ma { position: absolute; left: 18px; top: 19px; width: 112px; height: 50px; box-sizing: border-box; padding-left: 10px; gap: 8px; font-size: 32px; color: #333; }
.ma-values { position: absolute; left: 147px; top: 6px; width: 620px; display: flex; flex-wrap: wrap; column-gap: 27px; font-size: 31px; line-height: 41px; letter-spacing: -.5px; }
.zx { color: #222; font-size: 32px; }
.m5 { color: #111; }
.m10 { color: #dca028; }
.m20 { color: #e6607a; }
.m30 { color: #62b944; }
.fq { position: absolute; left: 828px; top: 22px; font-size: 36px; line-height: 46px; color: #444; }
.cm { position: absolute; left: 960px; top: 10px; width: 107px; height: 55px; box-sizing: border-box; border: 1.5px solid #777; border-radius: 7px; text-align: center; font-size: 35px; line-height: 53px; color: #222; }
.cm::after { content: ""; position: absolute; right: -9px; top: -6px; width: 16px; height: 22px; border-radius: 50%; background: #f0303c; }

.main-chart { display: block; margin-left: 12px; overflow: visible; }
.ylab { font: 400 34px Roboto, sans-serif; fill: #999; letter-spacing: -.8px; }
.plab { font: 400 30px Roboto, sans-serif; fill: #111; letter-spacing: -.6px; }
.ln, .ln2, .ln3 { fill: none; stroke-linejoin: round; stroke-linecap: round; }
.ln { stroke-width: 3; }
.ln2 { stroke-width: 2.6; }
.ln3 { stroke-width: 2.4; }

.dates { height: 37px; display: flex; justify-content: space-between; padding: 0 13px; font-size: 34px; line-height: 54px; color: #999; }

.panel { position: relative; height: 258px; }
.panel.rsi { height: 250px; }
.panel svg { display: block; margin-left: 12px; }
.ph { position: absolute; left: 25px; top: 11px; width: 1030px; height: 90px; font-size: 36px; line-height: 53px; letter-spacing: -.6px; display: flex; align-items: flex-start; white-space: nowrap; }
.rsi-h { font-size: 35px; letter-spacing: -.7px; }
.pchip { width: 295px; height: 47px; box-sizing: border-box; padding-left: 10px; gap: 10px; font-size: 36px; line-height: 47px; color: #333; flex: none; letter-spacing: -.8px; }
.rchip { width: 242px; }
.q { width: 32px; height: 32px; border: 2.5px solid #bbb; border-radius: 50%; box-sizing: border-box; margin: 8px 19px 0 10px; color: #aaa; font-size: 22px; line-height: 27px; text-align: center; flex: none; }
.c-red { color: #c8303a; margin-right: 21px; }
.c-dark { color: #333; margin-right: 20px; }
.c-or { color: #ea7a40; }
.c-pk { color: #c2437f; }
.link { position: absolute; right: 0; top: 2px; color: #4a8edb; font-size: 36px; letter-spacing: 0; }
.second { position: absolute; left: -1px; top: 39px; }

.sep2 { height: 13px; }

.itabs { height: 121px; border-bottom: 1.5px solid #ccc; display: flex; align-items: center; padding: 9px 0 0 45px; box-sizing: border-box; position: relative; margin-bottom: 28px; }
.itab { font-size: 44px; line-height: 56px; color: #666; margin-right: 67px; white-space: nowrap; }
.itab:first-child { margin-right: 82px; }
.itab.on { font-size: 50px; font-weight: 700; color: #222; margin-left: -18px; margin-right: 62px; }
.itab.on::after { content: ""; position: absolute; left: 216px; top: 108px; width: 60px; height: 12px; border-radius: 6px; background: #f3343d; }

.foot { height: 153px; background: #272727; display: grid; grid-template-columns: 248px 208px 208px 208px 208px; }
.sector { display: flex; flex-direction: column; align-items: center; }
.up { width: 25px; height: 15px; background: #aaa; clip-path: polygon(50% 0, 100% 100%, 0 100%); margin-top: 11px; }
.s-name { font-size: 36px; line-height: 44px; color: #888; margin-top: 18px; }
.s-pct { font-size: 36px; line-height: 44px; color: #d8201f; margin-top: 17px; letter-spacing: -.5px; }
.act { display: flex; flex-direction: column; align-items: center; color: #ddd; font-size: 36px; line-height: 46px; }
.act svg { margin-top: 22px; flex: none; }
.act span { margin-top: 4px; }
</style>
